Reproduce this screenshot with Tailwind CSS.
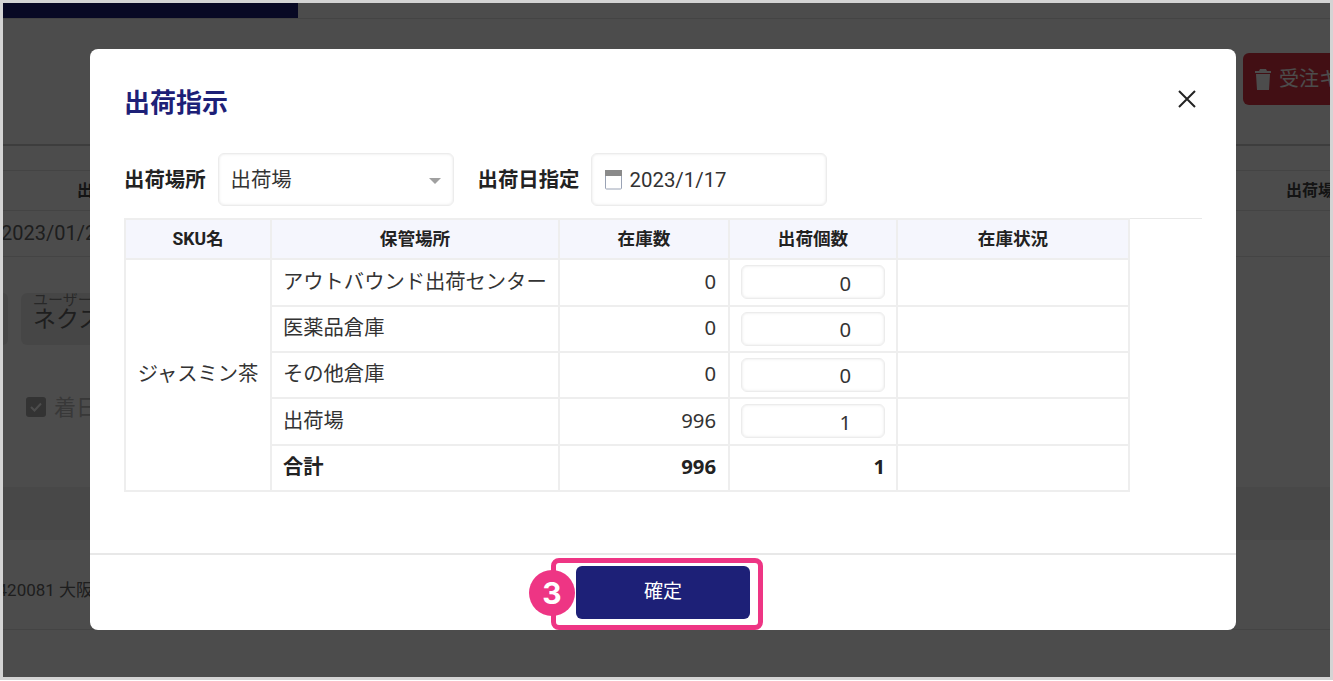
<!DOCTYPE html>
<html lang="ja">
<head>
  <meta charset="UTF-8" />
  <title>出荷指示</title>
  <script src="https://cdn.jsdelivr.net/npm/@tailwindcss/browser@4"></script>
</head>
<body class="bg-white font-['Roboto','Noto_Sans_CJK_JP',sans-serif]">
  <div class="relative h-[680px] w-[1333px] overflow-hidden border-[3px] border-[#d4d4d4] bg-white text-[#666]">

    <!-- page behind the dialog -->
    <div class="h-[16px] border-b border-[#e5e5e5]"><div class="h-[15px] w-[295px] bg-[#1d1f7a]"></div></div>
    <div class="flex h-[127px] justify-end border-b-2 border-[#ccc] pt-[34px]">
      <div class="flex h-[52px] w-[87px] items-center gap-[8px] rounded-l-md bg-[#dc3545] pl-[12px] text-[20px] whitespace-nowrap overflow-hidden text-white">
        <svg class="w-[16px] h-[21px] shrink-0" viewBox="0 0 16 21" fill="currentColor"><path d="M5 0h6l1 2h4v2H0V2h4zM1 5h14l-1 16H2z"/></svg>
        <span>受注キャンセル</span>
      </div>
    </div>
    <div class="h-[24px]"></div>
    <div class="flex h-[41px] items-center justify-between border-y border-[#e5e5e5] bg-white pl-[74px] text-[16px] font-bold text-[#444] whitespace-nowrap overflow-hidden">
      <span>出荷日</span><span class="w-[44px] overflow-hidden">出荷場所</span>
    </div>
    <div class="flex h-[46px] items-center border-b border-[#e5e5e5] pb-[2px] text-[20px] whitespace-nowrap overflow-hidden">
      <span class="-ml-[2px]">2023/01/25</span>
    </div>
    <div class="flex h-[100px] gap-[13px] pt-[36px]">
      <div class="h-[52px] w-[5px] rounded-r-md bg-[#ececec]"></div>
      <div class="flex h-[52px] w-[300px] flex-col rounded-md bg-[#ececec] px-[12px] leading-none whitespace-nowrap">
        <span class="text-[15px] text-[#888]">ユーザー名</span>
        <span class="text-[23px]">ネクスト</span>
      </div>
    </div>
    <div class="mt-[30px] flex h-[40px] items-center gap-[8px] pl-[23px] text-[22px] text-[#bbb]">
      <span class="flex h-[20px] w-[20px] items-center justify-center rounded-[3px] bg-[#aaa]">
        <svg class="w-[14px] h-[14px]" viewBox="0 0 14 14" fill="none" stroke="white" stroke-width="2"><path d="M2 7l3.5 3.5L12 3.5"/></svg>
      </span>
      <span>着日指定</span>
    </div>
    <div class="mt-[60px] h-[53px] bg-[#f0f0f0]"></div>
    <div class="flex h-[90px] items-center border-b border-[#e5e5e5] pt-[12px] text-[17px] whitespace-nowrap">
      <span class="-ml-[15px]">5420081 大阪府</span>
    </div>

    <!-- dialog -->
    <div class="absolute inset-0 bg-black/70"></div>
    <div class="absolute left-[87px] top-[46px] flex h-[581px] w-[1146px] flex-col rounded-[8px] bg-white text-[#222]">
      <div class="flex h-[104px] shrink-0 items-start justify-between pl-[34px] pr-[40px]">
        <h2 class="mt-[34px] text-[26px] leading-[40px] font-bold text-[#1d2077]">出荷指示</h2>
        <button class="mt-[41px]">
          <svg class="w-[18px] h-[18px]" viewBox="0 0 18 18" fill="none" stroke="#222" stroke-width="2"><path d="M1 1l16 16M17 1L1 17"/></svg>
        </button>
      </div>
      <div class="ml-[34px] mr-[34px] flex h-[66px] shrink-0 items-start border-b border-[#e8e8e8] text-[20.4px]">
        <label class="font-bold leading-[55px]">出荷場所</label>
        <div class="ml-[12px] flex h-[53px] w-[236px] items-center justify-between rounded-[6px] border border-[#ececec] pt-[2px] pl-[12px] pr-[12px] shadow-[inset_0_0_3px_#e5e5e5]">
          <span class="text-[#333]">出荷場</span>
          <span class="h-0 w-0 border-x-[6px] border-t-[6px] border-x-transparent border-t-[#a0a0a0]"></span>
        </div>
        <label class="ml-[24px] font-bold leading-[55px]">出荷日指定</label>
        <div class="ml-[11px] flex h-[53px] w-[236px] items-center gap-[7px] rounded-[6px] border border-[#ececec] pl-[12px] shadow-[inset_0_0_3px_#e5e5e5]">
          <svg class="w-[19px] h-[21px]" viewBox="0 0 19 21"><rect x="1.5" y="3" width="16" height="17" rx="1" fill="white" stroke="#9aa3b5" stroke-width="1"/><rect x="1" y="1" width="17" height="6" fill="#8a8a8a"/></svg>
          <span class="pt-[2px] text-[#333]">2023/1/17</span>
        </div>
      </div>
      <table class="-mt-[1px] ml-[34px] w-[1005px] shrink-0 table-fixed border-collapse text-[20.3px] text-[#333] [&_td]:border-2 [&_td]:border-[#eeeeee] [&_th]:border-2 [&_th]:border-[#eeeeee]">
        <colgroup><col class="w-[146px]"/><col class="w-[288px]"/><col class="w-[170px]"/><col class="w-[168px]"/><col class="w-[232px]"/></colgroup>
        <thead>
          <tr class="h-[40px] bg-[#f5f6fd] text-[17.6px] font-bold text-[#222]">
            <th>SKU名</th><th>保管場所</th><th>在庫数</th><th>出荷個数</th><th>在庫状況</th>
          </tr>
        </thead>
        <tbody class="font-['Noto_Sans','Noto_Sans_CJK_JP',sans-serif]">
          <tr class="h-[47px]">
            <td rowspan="5" class="pb-[4px] text-center whitespace-nowrap">ジャスミン茶</td>
            <td class="pl-[11px] pb-[3px] whitespace-nowrap">アウトバウンド出荷センター</td>
            <td class="pr-[12px] pb-[3px] text-right">0</td>
            <td class="px-[11px] pb-[1px]"><div class="flex h-[34px] items-center justify-end rounded-[6px] border border-[#ececec] pt-[2px] pr-[33px] shadow-[inset_0_0_3px_#e5e5e5]">0</div></td>
            <td></td>
          </tr>
          <tr class="h-[46px]">
            <td class="pl-[11px] pb-[3px]">医薬品倉庫</td>
            <td class="pr-[12px] pb-[3px] text-right">0</td>
            <td class="px-[11px] pb-[1px]"><div class="flex h-[34px] items-center justify-end rounded-[6px] border border-[#ececec] pt-[2px] pr-[33px] shadow-[inset_0_0_3px_#e5e5e5]">0</div></td>
            <td></td>
          </tr>
          <tr class="h-[46px]">
            <td class="pl-[11px] pb-[3px]">その他倉庫</td>
            <td class="pr-[12px] pb-[3px] text-right">0</td>
            <td class="px-[11px] pb-[1px]"><div class="flex h-[34px] items-center justify-end rounded-[6px] border border-[#ececec] pt-[2px] pr-[33px] shadow-[inset_0_0_3px_#e5e5e5]">0</div></td>
            <td></td>
          </tr>
          <tr class="h-[47px]">
            <td class="pl-[11px] pb-[3px]">出荷場</td>
            <td class="pr-[12px] pb-[3px] text-right">996</td>
            <td class="px-[11px] pb-[1px]"><div class="flex h-[34px] items-center justify-end rounded-[6px] border border-[#ececec] pt-[2px] pr-[33px] shadow-[inset_0_0_3px_#e5e5e5]">1</div></td>
            <td></td>
          </tr>
          <tr class="h-[46px] font-bold text-[#222]">
            <td class="pl-[11px] pb-[3px]">合計</td>
            <td class="pr-[12px] pb-[3px] text-right">996</td>
            <td class="pr-[11px] pb-[3px] text-right">1</td>
            <td></td>
          </tr>
        </tbody>
      </table>
      <div class="relative mt-auto flex h-[77px] shrink-0 justify-center border-t-2 border-[#e8e8e8] pt-[11px]">
        <button class="h-[53px] w-[174px] rounded-[6px] bg-[#1d2077] pb-[1px] text-[19px] text-white">確定</button>
        <!-- callout -->
        <div class="absolute left-[461px] top-[3px] h-[72px] w-[212px] rounded-[8px] border-[5px] border-[#ee3584]"></div>
        <div class="absolute left-[439px] top-[15px] flex h-[46px] w-[46px] items-center justify-center rounded-full bg-[#ee3584] text-[30px] font-bold text-white font-['Inter',sans-serif]">3</div>
      </div>
    </div>
  </div>
</body>
</html>
